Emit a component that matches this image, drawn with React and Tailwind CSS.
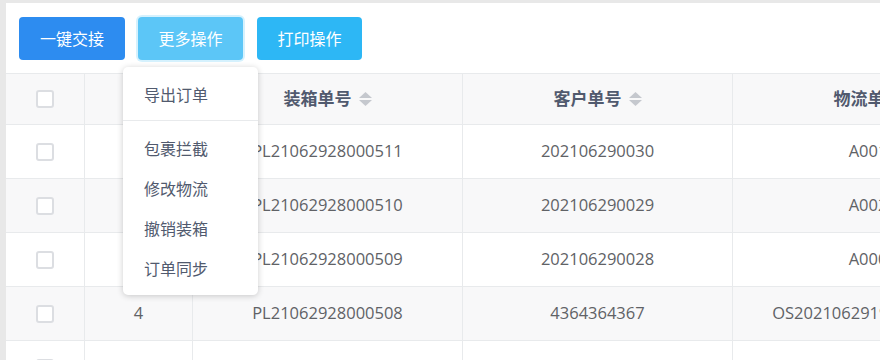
import React from "react";

const FONT = { fontFamily: '"Open Sans", "Noto Sans CJK SC", sans-serif' };

const ROWS = [
  { no: "1", box: "PL21062928000511", cust: "202106290030", ship: "A00115" },
  { no: "2", box: "PL21062928000510", cust: "202106290029", ship: "A00214" },
  { no: "3", box: "PL21062928000509", cust: "202106290028", ship: "A00013" },
  { no: "4", box: "PL21062928000508", cust: "4364364367", ship: "OS20210629193216000012" },
  { no: "5", box: "PL21062928000507", cust: "4364364366", ship: "OS20210629193215000011" },
];

function SortIcon() {
  return (
    <span className="ml-[7px] inline-flex flex-col gap-[2px]">
      <svg width="13" height="6" viewBox="0 0 13 6"><path d="M6.5 0 L13 6 L0 6 Z" fill="#c5c8ce" /></svg>
      <svg width="13" height="6" viewBox="0 0 13 6"><path d="M0 0 L13 0 L6.5 6 Z" fill="#c5c8ce" /></svg>
    </span>
  );
}

function Checkbox() {
  return <span className="block w-[18px] h-[18px] rounded-[3px] border-2 border-[#dcdee2] bg-white" />;
}

const MENU = ["包裹拦截", "修改物流", "撤销装箱", "订单同步"];

export default function App() {
  return (
    <div className="w-[880px] h-[360px] overflow-hidden bg-[#e8e8e8] pl-[6px] pt-[3px]" style={FONT}>
      <div className="bg-white h-full">
        {/* toolbar */}
        <div className="flex gap-[13px] pl-[13px] pt-[14px] pb-[13px]">
          <button className="h-[43px] w-[106px] rounded-[4px] bg-[#2d8cf0] text-white text-[16px]">一键交接</button>
          <div className="relative">
            <button className="h-[43px] w-[105px] rounded-[4px] bg-[#5cc6f7] text-white text-[16px] shadow-[0_0_0_2px_rgba(45,183,245,0.2)]">
              更多操作
            </button>
            <div className="absolute left-[-15px] top-[50px] z-10 w-[135px] rounded-[5px] bg-white pt-[8px] pb-[6px] shadow-[0_1px_6px_rgba(0,0,0,0.2)]">
              <div className="h-[40px] flex items-center pl-[21px] text-[16px] text-[#515a6e]">导出订单</div>
              <div className="mt-[5px] mb-[8px] h-px bg-[#e8eaec]" />
              {MENU.map((m) => (
                <div key={m} className="h-[40px] flex items-center pl-[21px] text-[16px] text-[#515a6e]">{m}</div>
              ))}
            </div>
          </div>
          <button className="h-[43px] w-[105px] ml-px rounded-[4px] bg-[#2db7f5] text-white text-[16px]">打印操作</button>
        </div>

        {/* table */}
        <div className="overflow-hidden border-t border-[#e8eaec]">
          <div className="flex w-[1030px] h-[51px] bg-[#f8f8f9] border-b border-[#e8eaec] text-[17px] font-bold text-[#515a6e]">
            <div className="w-[79px] flex items-center justify-center border-r border-[#e8eaec]"><Checkbox /></div>
            <div className="w-[108px] border-r border-[#e8eaec]" />
            <div className="w-[270px] flex items-center justify-center border-r border-[#e8eaec]">装箱单号<SortIcon /></div>
            <div className="w-[270px] flex items-center justify-center border-r border-[#e8eaec]">客户单号<SortIcon /></div>
            <div className="w-[290px] flex items-center justify-center border-r border-[#e8eaec]">物流单号<SortIcon /></div>
          </div>
          {ROWS.map((r, i) => (
            <div
              key={r.no}
              className={`flex w-[1030px] h-[54px] border-b border-[#e8eaec] text-[16.5px] text-[#606266] ${i % 2 === 1 ? "bg-[#f8f8f9]" : "bg-white"}`}
            >
              <div className="w-[79px] flex items-center justify-center border-r border-[#e8eaec]"><Checkbox /></div>
              <div className="w-[108px] flex items-center justify-center border-r border-[#e8eaec]">{r.no}</div>
              <div className="w-[270px] flex items-center justify-center border-r border-[#e8eaec]">{r.box}</div>
              <div className="w-[270px] flex items-center justify-center border-r border-[#e8eaec]">{r.cust}</div>
              <div className="w-[290px] flex items-center justify-center border-r border-[#e8eaec] whitespace-nowrap">{r.ship}</div>
            </div>
          ))}
        </div>
      </div>
    </div>
  );
}
